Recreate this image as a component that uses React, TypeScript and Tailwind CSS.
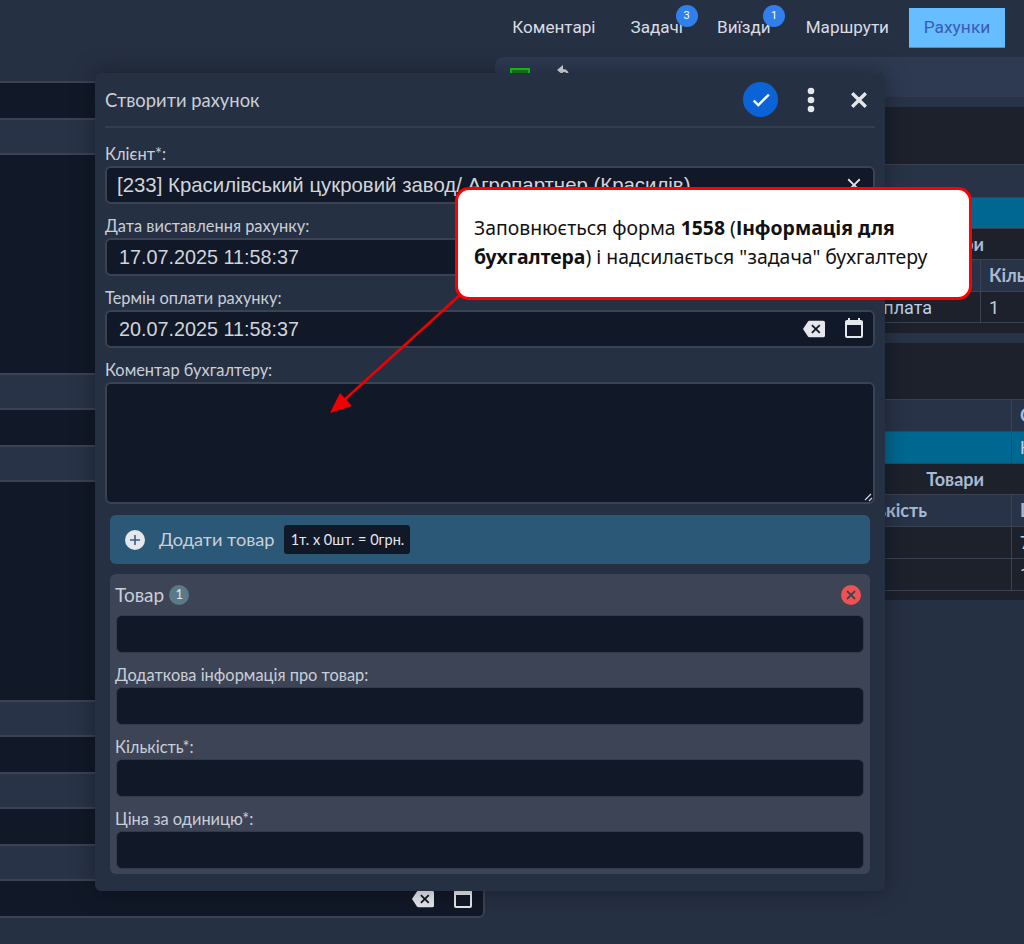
import React from "react";

const BACKSPACE = "M22,3H7C6.31,3 5.77,3.35 5.41,3.88L0,12L5.41,20.11C5.77,20.64 6.31,21 7,21H22A2,2 0 0,0 24,19V5A2,2 0 0,0 22,3M19,15.59L17.59,17L14,13.41L10.41,17L9,15.59L12.59,12L9,8.41L10.41,7L14,10.59L17.59,7L19,8.41L15.41,12";
const CALENDAR = "M19,19H5V8H19M16,1V3H8V1H6V3H5C3.89,3 3,3.89 3,5V19A2,2 0 0,0 5,21H19A2,2 0 0,0 21,19V5C21,3.89 20.1,3 19,3H18V1";
const CLOSE = "M19,6.41L17.59,5L12,10.59L6.41,5L5,6.41L10.59,12L5,17.59L6.41,19L12,13.41L17.59,19L19,17.59L13.41,12L19,6.41Z";

function Mdi({ d, size, className }: { d: string; size: number; className?: string }) {
  return (
    <svg width={size} height={size} viewBox="0 0 24 24" className={className} fill="currentColor">
      <path d={d} />
    </svg>
  );
}

function DateIcons({ edge }: { edge: "modal" | "page" }) {
  return (
    <div className={`flex items-center gap-[17px] text-[#e5e7eb] ${edge === "modal" ? "pr-[7px]" : "pr-0"}`}>
      <Mdi d={BACKSPACE} size={22} />
      <Mdi d={CALENDAR} size={24} />
    </div>
  );
}

function Label({ children }: { children: React.ReactNode }) {
  return (
    <div className="h-[34px] pt-[12px] text-[16.4px] leading-[20px] text-[#c9cfd8] font-['Lato',sans-serif]">
      {children}
    </div>
  );
}

function Field({
  label,
  value,
  right,
  valueClass,
}: {
  label: string;
  value: string;
  right?: React.ReactNode;
  valueClass: string;
}) {
  return (
    <div>
      <Label>{label}</Label>
      <div className="h-[38px] rounded-[6px] border-2 border-[#3b4252] bg-[#111827] flex items-center justify-between text-[#d1d5db] font-['Liberation_Sans',sans-serif]">
        <span className={`whitespace-nowrap ${valueClass}`}>{value}</span>
        {right}
      </div>
    </div>
  );
}

function ItemField({ label }: { label?: string }) {
  return (
    <div className="px-[6px]">
      {label ? (
        <div className="h-[34px] pt-[12px] -ml-[1px] text-[16.4px] leading-[20px] text-[#c9cfd8] font-['Lato',sans-serif]">{label}</div>
      ) : null}
      <div className="h-[38px] rounded-[6px] bg-[#111827] border border-[#333b4b]" />
    </div>
  );
}

function LeftRow({ kind, h }: { kind: "dark" | "light"; h: number }) {
  return (
    <div
      className={`border-t-2 border-[#3b4252] ${kind === "dark" ? "bg-[#111827]" : "bg-[#283347]"}`}
      style={{ height: h }}
    />
  );
}

function Cell({ children, className }: { children?: React.ReactNode; className?: string }) {
  return <div className={`border-l border-[#3b4252] pl-[8px] overflow-hidden whitespace-nowrap ${className ?? ""}`}>{children}</div>;
}

function TableRow({
  bg,
  h,
  split,
  left,
  right,
}: {
  bg: string;
  h: number;
  split: number;
  left?: React.ReactNode;
  right?: React.ReactNode;
}) {
  return (
    <div className={`flex border-t border-[#3b4252] items-stretch ${bg}`} style={{ height: h }}>
      <div className="shrink-0 flex items-center justify-end" style={{ width: split }}>
        {left}
      </div>
      <Cell className="flex-1 flex items-center">{right}</Cell>
    </div>
  );
}

function App() {
  return (
    <div className="relative w-[1024px] h-[944px] overflow-hidden bg-[#263043] font-['Roboto',sans-serif]">
      {/* Top navigation */}
      <header className="h-[57px] flex justify-end items-start pr-[19px] pt-[8px] text-[#d9dde3] text-[17.1px]">
        <div className="flex items-center h-[40px]">
          <span>Коментарі</span>
          <span className="relative ml-[35px]">
            Задачі
            <span className="absolute left-[45px] -top-[10px] w-[22px] h-[22px] rounded-full bg-[#2f80ed] text-white text-[11px] flex items-center justify-center">3</span>
          </span>
          <span className="relative ml-[34px]">
            Виїзди
            <span className="absolute left-[46px] -top-[10px] w-[22px] h-[22px] rounded-full bg-[#2f80ed] text-white text-[11px] flex items-center justify-center">1</span>
          </span>
          <span className="ml-[35px]">Маршрути</span>
          <span className="ml-[20px] w-[96px] h-[40px] flex items-center justify-center bg-[#66bdff] text-[#3b5bb5] border-b border-[#4f8fc7] text-[17.4px]">Рахунки</span>
        </div>
      </header>

      <main className="flex gap-[10px]">
        {/* Left column */}
        <section className="w-[485px] shrink-0 pt-[24px]">
          <LeftRow kind="dark" h={37} />
          <LeftRow kind="light" h={35} />
          <LeftRow kind="dark" h={220} />
          <LeftRow kind="light" h={35} />
          <LeftRow kind="dark" h={37} />
          <LeftRow kind="light" h={35} />
          <LeftRow kind="dark" h={220} />
          <LeftRow kind="light" h={35} />
          <LeftRow kind="dark" h={37} />
          <LeftRow kind="light" h={35} />
          <LeftRow kind="dark" h={37} />
          <LeftRow kind="light" h={35} />
          <div className="h-[39px] border-t-2 border-b-2 border-r-2 border-[#3b4252] rounded-br-[6px] bg-[#111827] flex items-center justify-end pr-[8px] text-[#e5e7eb]">
            <DateIcons edge="page" />
          </div>
        </section>

        {/* Right column */}
        <section className="flex-1 min-w-0 text-[18px]">
          <div className="h-[40px] rounded-tl-[8px] bg-[#2d3a52] flex items-start gap-[25px] pl-[15px] pt-[11px]">
            <span className="w-[20px] h-[14px] border-2 border-[#16d010] bg-[#1f7a1f]" />
            <svg className="-mt-[3px]" width="16" height="14" viewBox="0 0 16 14" fill="#d9dde3"><path d="M8 0 2 5l6 5V7c3 0 5 1 6 4 0-4-2-7-6-7z" /></svg>
          </div>
          <div className="h-[10px] bg-[#283347]" />
          <div className="h-[57px] bg-[#1c212c]" />
          <div className="h-[33px] border-t border-[#3b4252] bg-[#283347]" />
          <div className="h-[31px] border-t border-[#3b4252] bg-[#006890]" />
          <div className="h-[31px] border-t border-[#3b4252] bg-[#1c212c] flex items-center justify-end pr-[40px] font-['Lato',sans-serif] font-bold text-[#a9bbd3]">Товари</div>
          <TableRow
            bg="bg-[#283347]"
            h={32}
            split={485}
            right={<span className="font-['Lato',sans-serif] font-bold text-[#a9bbd3]">Кількість</span>}
          />
          <TableRow
            bg="bg-[#1c212c]"
            h={31}
            split={485}
            left={<span className="pr-[48px] text-[#bcd0e6]">Передоплата</span>}
            right={<span className="text-[#bcd0e6]">1</span>}
          />
          <div className="h-[11px] border-t border-[#3b4252] bg-[#1c212c]" />
          <div className="h-[10px] bg-[#283347]" />
          <div className="h-[56px] bg-[#1c212c]" />
          <TableRow
            bg="bg-[#283347]"
            h={32}
            split={516}
            right={<span className="font-['Lato',sans-serif] font-bold text-[#a9bbd3]">Сума</span>}
          />
          <TableRow
            bg="bg-[#006890]"
            h={32}
            split={516}
            right={<span className="text-[#bcd0e6]">Назва</span>}
          />
          <div className="h-[31px] border-t border-[#3b4252] bg-[#1c212c] flex items-center justify-end pr-[40px] font-['Lato',sans-serif] font-bold text-[#a9bbd3]">Товари</div>
          <TableRow
            bg="bg-[#283347]"
            h={32}
            split={516}
            left={<span className="pr-[84px] font-['Lato',sans-serif] font-bold text-[#a9bbd3]">Кількість</span>}
            right={<span className="font-['Lato',sans-serif] font-bold text-[#a9bbd3]">Ціна</span>}
          />
          <TableRow bg="bg-[#1c212c]" h={32} split={516} right={<span className="text-[#bcd0e6]">7</span>} />
          <TableRow bg="bg-[#1c212c]" h={32} split={516} right={<span className="text-[#bcd0e6]">1</span>} />
          <div className="h-[10px] border-t border-[#3b4252] bg-[#1c212c]" />
        </section>
      </main>

      {/* Modal */}
      <div className="absolute left-[95px] top-[73px] w-[790px] h-[818px] rounded-[6px] bg-[#263043] shadow-[0_0_24px_rgba(0,0,0,0.35)] px-[10px]">
        <div className="h-[55px] border-b-2 border-[#343e50] flex items-center justify-between font-['Lato',sans-serif]">
          <span className="pt-[2px] text-[18.4px] text-[#c9cfd8]">Створити рахунок</span>
          <div className="flex items-center text-[#e5e7eb]">
            <span className="w-[35px] h-[35px] rounded-full bg-[#0a64d8] flex items-center justify-center text-white">
              <svg width="22" height="22" viewBox="0 0 24 24" fill="currentColor"><path d="M21,7L9,19L3.5,13.5L4.91,12.09L9,16.17L19.59,5.59L21,7Z" stroke="currentColor" strokeWidth="0.8" /></svg>
            </span>
            <svg className="ml-[25px]" width="16" height="26" viewBox="0 0 16 26" fill="currentColor">
              <circle cx="8" cy="4" r="3.3" />
              <circle cx="8" cy="13" r="3.3" />
              <circle cx="8" cy="22" r="3.3" />
            </svg>
            <svg className="ml-[28px] mr-[4px]" width="24" height="24" viewBox="0 0 24 24" fill="currentColor"><path d={CLOSE} stroke="currentColor" strokeWidth="1.4" /></svg>
          </div>
        </div>
        <div className="pt-[4px]">
          <Field
            label="Клієнт*:"
            value="[233] Красилівський цукровий завод/ Агропартнер (Красилів)"
            valueClass="pl-[10px] text-[20.4px]"
            right={<Mdi d={CLOSE} size={22} className="mr-[8px] text-[#e5e7eb]" />}
          />
          <Field label="Дата виставлення рахунку:" value="17.07.2025 11:58:37" valueClass="pl-[12px] pt-[1px] text-[19.8px]" right={<DateIcons edge="modal" />} />
          <Field label="Термін оплати рахунку:" value="20.07.2025 11:58:37" valueClass="pl-[12px] pt-[1px] text-[19.8px]" right={<DateIcons edge="modal" />} />
          <div className="relative">
            <Label>Коментар бухгалтеру:</Label>
            <textarea className="block w-full h-[122px] rounded-[6px] border-2 border-[#3b4252] bg-[#111827] resize-none" readOnly />
            <svg className="absolute right-[2px] bottom-[2px]" width="9" height="9" viewBox="0 0 9 9" stroke="#c9cfd8" strokeWidth="1.3">
              <path d="M1 7 7 1M5 8 8 5" />
            </svg>
          </div>
        </div>

        <div className="mx-[5px] mt-[11px] h-[49px] rounded-[6px] bg-[#2b5876] flex items-center pl-[15px] font-['Lato',sans-serif]">
          <span className="w-[20px] h-[20px] rounded-full bg-[#e5e7eb] flex items-center justify-center">
            <svg width="12" height="12" viewBox="0 0 12 12"><path d="M6 1v10M1 6h10" stroke="#3a5a8a" strokeWidth="1.6" /></svg>
          </span>
          <span className="ml-[14px] text-[18.2px] text-[#c9cfd8]">Додати товар</span>
          <span className="ml-[10px] h-[29px] w-[126px] rounded-[3px] bg-[#111827] flex items-center justify-center text-[14.5px] text-[#e5e7eb]">1т. x 0шт. = 0грн.</span>
        </div>

        <div className="mx-[5px] mt-[10px] h-[300px] rounded-[6px] bg-[#3c4456]">
          <div className="h-[41px] flex items-center justify-between pl-[5px] pr-[9px] font-['Lato',sans-serif]">
            <div className="flex items-center gap-[5px]">
              <span className="pt-[2px] text-[19px] text-[#c9cfd8]">Товар</span>
              <span className="w-[20px] h-[20px] rounded-full bg-[#5a7a88] text-[#dfe5ea] text-[13px] flex items-center justify-center">1</span>
            </div>
            <span className="w-[20px] h-[20px] rounded-full bg-[#f05252] flex items-center justify-center">
              <svg width="12" height="12" viewBox="0 0 12 12"><path d="M2 2l8 8M10 2l-8 8" stroke="#3c4456" strokeWidth="1.8" /></svg>
            </span>
          </div>
          <ItemField />
          <ItemField label="Додаткова інформація про товар:" />
          <ItemField label="Кількість*:" />
          <ItemField label="Ціна за одиницю*:" />
        </div>
      </div>

      {/* Annotation arrow */}
      <svg className="absolute left-0 top-0 pointer-events-none" width="1024" height="944" viewBox="0 0 1024 944">
        <line x1="460" y1="295" x2="342" y2="402" stroke="#f00000" strokeWidth="2.5" />
        <path d="M330 413 L340 393 L352 406 Z" fill="#f00000" />
      </svg>

      {/* Annotation callout */}
      <div className="absolute left-[455px] top-[187px] w-[517px] h-[113px] rounded-[14px] border-[3px] border-[#ff0000] bg-white pl-[16px] pt-[23px] text-[19.4px] leading-[29px] text-[#111] font-['Noto_Sans',sans-serif]">
        Заповнюється форма <b>1558</b> (<b>Інформація для</b>
        <br />
        <b>бухгалтера</b>) і надсилається "задача" бухгалтеру
      </div>
    </div>
  );
}

export default App;
